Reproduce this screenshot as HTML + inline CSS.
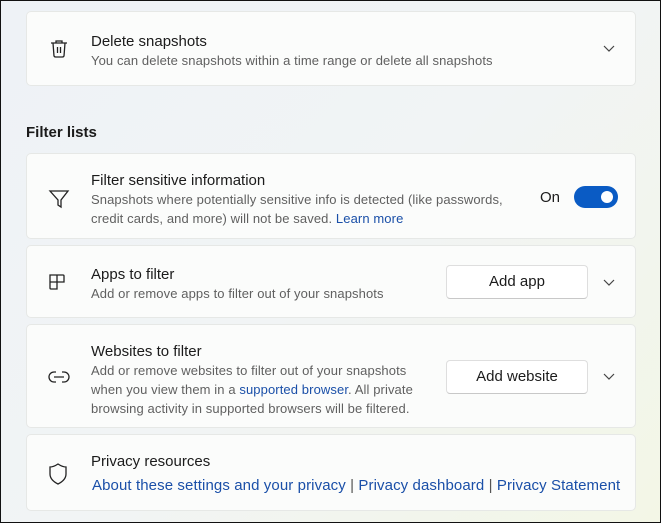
<!DOCTYPE html>
<html><head><style>
*{margin:0;padding:0;box-sizing:border-box}
body{width:661px;height:523px;overflow:hidden;font-family:"Liberation Sans",sans-serif;background:linear-gradient(135deg,#eef2f6 0%,#f1f4f5 50%,#f3f6e6 100%);border:1px solid #111;position:relative}
.card{position:absolute;left:25px;width:610px;background:#fbfcfb;border:1px solid #e6e8e6;border-radius:5px}
.ic{position:absolute;left:20px}
.t{position:absolute;left:64px;font-size:15px;color:#1b1b1b}
.s{position:absolute;left:64px;font-size:13px;color:#606060;line-height:19px;letter-spacing:0.1px}
a{color:#1a4fa8;text-decoration:none}
.chev{position:absolute;left:576px}
.btn{position:absolute;left:419px;width:142px;height:34px;background:#fff;border:1px solid #dedede;border-bottom-color:#c8c8c8;border-radius:4px;font-size:15px;color:#1b1b1b;text-align:center;line-height:32px}
</style></head><body>
<div class="card" style="top:10px;height:75px">
<svg class="ic" style="top:25px" width="24" height="24" viewBox="0 0 24 24" fill="none" stroke="#222" stroke-width="1.3"><path d="M4 6h16M9 6V4h6v2M6 6l1 13a2 2 0 0 0 2 1h6a2 2 0 0 0 2-1l1-13M10.5 10v6M13.5 10v6"/></svg>
<div class="t" style="top:21px">Delete snapshots</div>
<div class="s" style="top:39px">You can delete snapshots within a time range or delete all snapshots</div>
<svg class="chev" style="top:33px" width="12" height="8" viewBox="0 0 12 8" fill="none" stroke="#444" stroke-width="1.2"><path d="M1 1l5 5 5-5"/></svg>
</div>
<div style="position:absolute;left:25px;top:123px;font-size:15px;font-weight:bold;color:#1b1b1b">Filter lists</div>
<div class="card" style="top:152px;height:86px">
<svg class="ic" style="top:33px" width="24" height="24" viewBox="0 0 24 24" fill="none" stroke="#222" stroke-width="1.3"><path d="M3 4h18l-7 9v7l-3-2v-5z"/></svg>
<div class="t" style="top:18px">Filter sensitive information</div>
<div class="s" style="top:36px">Snapshots where potentially sensitive info is detected (like passwords,<br>credit cards, and more) will not be saved. <a>Learn more</a></div>
<div style="position:absolute;left:513px;top:35px;font-size:15px;color:#1b1b1b">On</div>
<div style="position:absolute;left:547px;top:32px;width:44px;height:22px;border-radius:11px;background:#0a5bc4"><div style="position:absolute;right:5px;top:5px;width:12px;height:12px;border-radius:6px;background:#fff"></div></div>
</div>
<div class="card" style="top:244px;height:73px">
<svg class="ic" style="top:25px" width="22" height="22" viewBox="0 0 22 22" fill="none" stroke="#222" stroke-width="1.3"><path d="M3 4h7v14H4a1 1 0 0 1-1-1zM3 11h14v-6a1 1 0 0 0-1-1h-6M10 11v7"/></svg>
<div class="t" style="top:20px">Apps to filter</div>
<div class="s" style="top:38px">Add or remove apps to filter out of your snapshots</div>
<div class="btn" style="top:19px">Add app</div>
<svg class="chev" style="top:33px" width="12" height="8" viewBox="0 0 12 8" fill="none" stroke="#444" stroke-width="1.2"><path d="M1 1l5 5 5-5"/></svg>
</div>
<div class="card" style="top:323px;height:104px">
<svg class="ic" style="top:42px" width="24" height="20" viewBox="0 0 24 20" fill="none" stroke="#222" stroke-width="1.3"><path d="M9 5H7a5 5 0 0 0 0 10h2M15 5h2a5 5 0 0 1 0 10h-2M7 10h10"/></svg>
<div class="t" style="top:18px">Websites to filter</div>
<div class="s" style="top:36px">Add or remove websites to filter out of your snapshots<br>when you view them in a <a>supported browser</a>. All private<br>browsing activity in supported browsers will be filtered.</div>
<div class="btn" style="top:35px">Add website</div>
<svg class="chev" style="top:48px" width="12" height="8" viewBox="0 0 12 8" fill="none" stroke="#444" stroke-width="1.2"><path d="M1 1l5 5 5-5"/></svg>
</div>
<div class="card" style="top:433px;height:77px">
<svg class="ic" style="top:27px" width="22" height="24" viewBox="0 0 22 24" fill="none" stroke="#222" stroke-width="1.3"><path d="M11 2c3 2 6 3 8 3v7c0 5-4 8-8 10-4-2-8-5-8-10V5c2 0 5-1 8-3z"/></svg>
<div class="t" style="top:18px">Privacy resources</div>
<div style="position:absolute;left:65px;top:42px;font-size:15px;color:#1a4fa8;white-space:nowrap;letter-spacing:0.1px">About these settings and your privacy <span style="color:#555">|</span> Privacy dashboard <span style="color:#555">|</span> Privacy Statement</div>
</div>
</body></html>
